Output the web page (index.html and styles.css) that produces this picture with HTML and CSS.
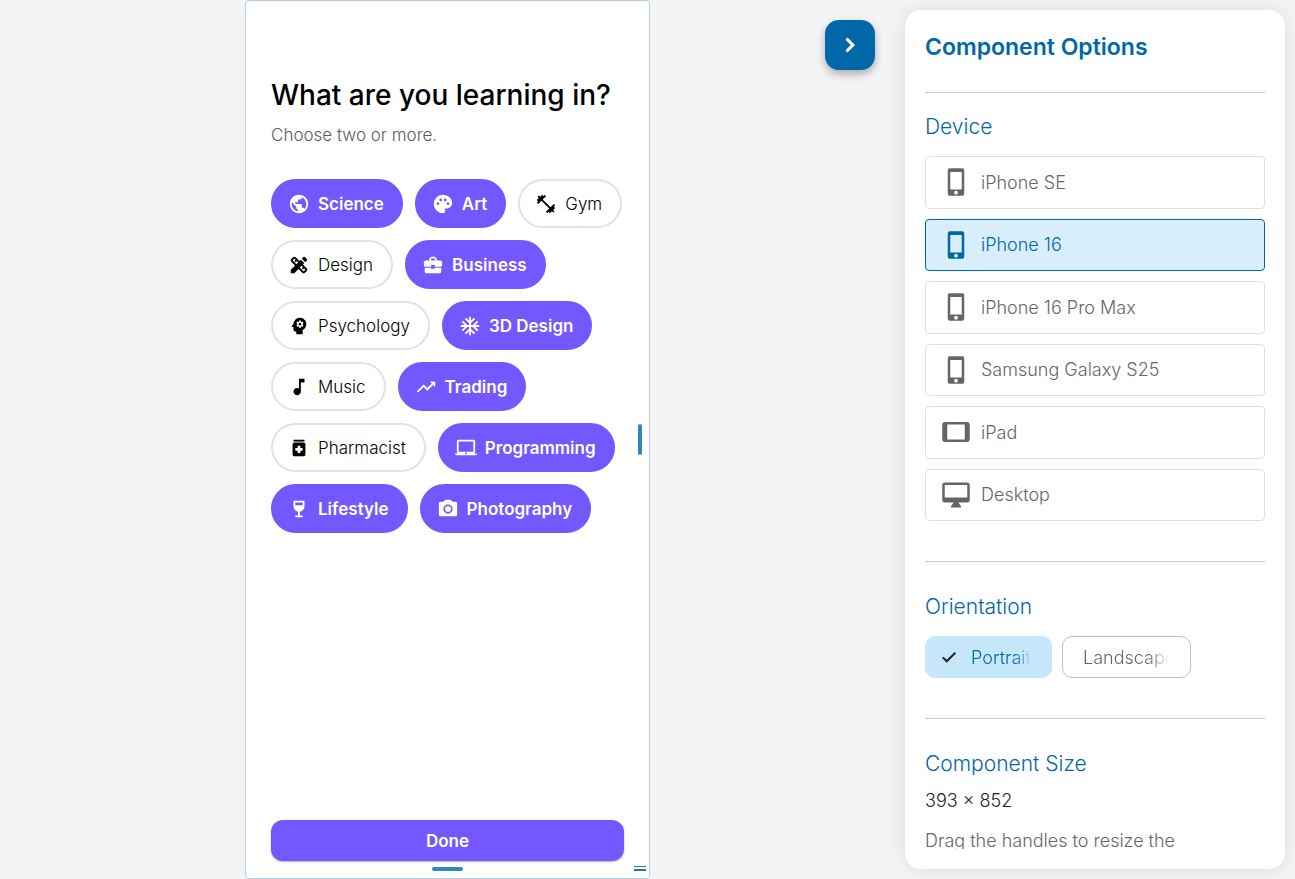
FILE: index.html
```html
<!DOCTYPE html>
<html lang="en">
<head>
<meta charset="utf-8">
<meta name="viewport" content="width=device-width, initial-scale=1">
<title>Component Preview</title>
<link rel="stylesheet" href="styles.css">
</head>
<body>
<main class="stage">
  <section class="device-frame">
    <h1 class="title">What are you learning in?</h1>
    <p class="subtitle">Choose two or more.</p>
    <div class="chips">
      <button class="chip selected" type="button" aria-pressed="true"><svg viewBox="0 0 24 24"><path d="M12 2C6.48 2 2 6.48 2 12s4.480 10 10 10 10-4.480 10-10S17.520 2 12 2zm-1 17.930c-3.950-.49-7-3.850-7-7.930 0-.62.08-1.210.21-1.790L9 15v1c0 1.100.9 2 2 2v1.930zm6.900-2.540c-.26-.81-1-1.390-1.900-1.390h-1v-3c0-.55-.45-1-1-1H8v-2h2c.55 0 1-.45 1-1V7h2c1.100 0 2-.9 2-2v-.41c2.930 1.190 5 4.060 5 7.410 0 2.080-.8 3.970-2.100 5.390z"/></svg>Science</button>
      <button class="chip selected" type="button" aria-pressed="true"><svg viewBox="0 0 24 24"><path d="M12 2C6.490 2 2 6.490 2 12s4.490 10 10 10c1.380 0 2.500-1.120 2.500-2.500 0-.61-.23-1.200-.64-1.670-.08-.1-.13-.21-.13-.33 0-.28.22-.5.5-.5H16c3.310 0 6-2.690 6-6 0-4.960-4.490-9-10-9zm5.500 11c-.83 0-1.500-.67-1.500-1.500s.67-1.500 1.500-1.500 1.500.67 1.500 1.500-.67 1.500-1.500 1.500zm-3-4c-.83 0-1.500-.67-1.500-1.500S13.670 6 14.500 6s1.500.67 1.500 1.500S15.330 9 14.500 9zM5 11.500c0-.83.67-1.500 1.500-1.500s1.500.67 1.500 1.500S7.330 13 6.500 13 5 12.330 5 11.500zm6-4c0 .83-.67 1.500-1.500 1.500S8 8.330 8 7.500 8.670 6 9.500 6s1.500.67 1.500 1.500z"/></svg>Art</button>
      <button class="chip" type="button" aria-pressed="false"><svg viewBox="0 0 24 24"><path d="M20.570 14.860L22 13.430 20.570 12 17 15.570 8.430 7 12 3.430 10.570 2 9.140 3.430 7.710 2 5.570 4.140 4.140 2.710 2.710 4.140l1.430 1.430L2 7.710l1.430 1.430L2 10.570 3.430 12 7 8.430 15.570 17 12 20.570 13.430 22l1.430-1.430L16.290 22l2.140-2.140 1.430 1.430 1.430-1.430-1.430-1.430L22 16.290z"/></svg>Gym</button>
      <button class="chip" type="button" aria-pressed="false"><svg viewBox="0 0 24 24"><path d="M16.240 11.510l1.570-1.570-3.750-3.750-1.570 1.570-4.140-4.130c-.78-.78-2.050-.78-2.830 0l-1.900 1.900c-.78.78-.78 2.050 0 2.830l4.130 4.130L3 17.250V21h3.750l4.760-4.760 4.130 4.130c.95.95 2.230.6 2.830 0l1.900-1.900c.78-.78.78-2.050 0-2.830l-4.130-4.130zm-7.060-.44L5.040 6.940l1.890-1.900L8.200 6.310 7.020 7.500l1.410 1.410 1.190-1.190 1.450 1.450-1.890 1.900zm7.880 7.890l-4.130-4.130 1.900-1.900 1.450 1.450-1.190 1.190 1.410 1.410 1.190-1.190 1.270 1.270-1.900 1.900zM20.710 7.040c.39-.39.39-1.020 0-1.410l-2.340-2.340c-.47-.47-1.120-.29-1.410 0l-1.830 1.830 3.750 3.750 1.830-1.830z"/></svg>Design</button>
      <button class="chip selected" type="button" aria-pressed="true"><svg viewBox="0 0 24 24"><path d="M10 16v-1H3.010L3 19c0 1.110.89 2 2 2h14c1.110 0 2-.89 2-2v-4h-7v1h-4zm10-9h-4.010V5l-2-2h-4l-2 2v2H4c-1.100 0-2 .9-2 2v3c0 1.110.89 2 2 2h6v-2h4v2h6c1.100 0 2-.9 2-2V9c0-1.100-.9-2-2-2zm-6 0h-4V5h4v2z"/></svg>Business</button>
      <button class="chip" type="button" aria-pressed="false"><svg viewBox="0 0 24 24"><path d="M13 8.570c-.79 0-1.430.64-1.430 1.430s.64 1.430 1.430 1.430 1.430-.64 1.430-1.430-.64-1.430-1.430-1.430z"/><path d="M13 3C9.250 3 6.200 5.940 6.020 9.640L4.100 12.200c-.25.33-.01.8.4.8H6v3c0 1.100.9 2 2 2h1v3h7v-4.680c2.360-1.120 4-3.530 4-6.320 0-3.870-3.130-7-7-7zm3 7c0 .13-.01.26-.02.39l.83.66c.08.06.1.16.05.25l-.8 1.390c-.05.09-.16.12-.24.09l-.99-.4c-.21.16-.43.29-.67.39L14 13.830c-.01.1-.1.17-.2.17h-1.600c-.1 0-.18-.07-.2-.17l-.15-1.060c-.25-.1-.47-.23-.68-.39l-.99.4c-.09.03-.2 0-.25-.09l-.8-1.390c-.05-.08-.03-.19.05-.25l.84-.66c-.01-.13-.02-.26-.02-.39s.02-.27.04-.39l-.85-.66c-.08-.06-.1-.16-.05-.26l.8-1.380c.05-.09.15-.12.24-.09l1 .4c.2-.15.43-.29.67-.39L12 6.170c.02-.1.1-.17.2-.17h1.600c.1 0 .18.07.2.17l.15 1.060c.24.1.46.23.67.39l1-.4c.09-.03.2 0 .24.09l.8 1.380c.05.09.03.2-.05.26l-.85.66c.03.12.04.25.04.39z"/></svg>Psychology</button>
      <button class="chip selected" type="button" aria-pressed="true"><svg viewBox="0 0 24 24"><path d="M22 11h-4.170l3.240-3.240-1.410-1.420L15 11h-2V9l4.660-4.660-1.420-1.410L13 6.170V2h-2v4.170L7.760 2.930 6.340 4.340 11 9v2H9L4.340 6.340 2.930 7.760 6.170 11H2v2h4.170l-3.240 3.240 1.410 1.420L9 13h2v2l-4.660 4.660 1.420 1.410L11 17.830V22h2v-4.170l3.240 3.240 1.420-1.410L13 15v-2h2l4.660 4.660 1.410-1.420L17.830 13H22z"/></svg>3D Design</button>
      <button class="chip" type="button" aria-pressed="false"><svg viewBox="0 0 24 24"><path d="M12 3v10.550c-.59-.34-1.270-.55-2-.55-2.210 0-4 1.790-4 4s1.790 4 4 4 4-1.790 4-4V7h4V3z"/></svg>Music</button>
      <button class="chip selected" type="button" aria-pressed="true"><svg viewBox="0 0 24 24"><path d="M16 6l2.290 2.290-4.880 4.880-4-4L2 16.590 3.410 18l6-6 4 4 6.300-6.290L22 12V6z"/></svg>Trading</button>
      <button class="chip" type="button" aria-pressed="false"><svg viewBox="0 0 24 24"><path d="M6 3h12v2H6z"/><path d="M17 6H7c-1.100 0-2 .9-2 2v11c0 1.100.9 2 2 2h10c1.100 0 2-.9 2-2V8c0-1.100-.9-2-2-2zm-1 9h-2.500v2.500h-3V15H8v-3h2.500V9.500h3V12H16v3z"/></svg>Pharmacist</button>
      <button class="chip selected" type="button" aria-pressed="true"><svg viewBox="0 0 24 24"><path d="M20 18c1.100 0 1.990-.9 1.990-2L22 5c0-1.100-.9-2-2-2H4c-1.100 0-2 .9-2 2v11c0 1.100.9 2 2 2H0c0 1.100.9 2 2 2h20c1.100 0 2-.9 2-2h-4zM4 5h16v11H4V5zm8 14c-.55 0-1-.45-1-1s.45-1 1-1 1 .45 1 1-.45 1-1 1z"/></svg>Programming</button>
      <button class="chip selected" type="button" aria-pressed="true"><svg viewBox="0 0 24 24"><path d="M6 3v6c0 2.970 2.160 5.430 5 5.910V19H8v2h8v-2h-3v-4.090c2.840-.48 5-2.940 5-5.910V3H6zm10 5H8V5h8v3z"/></svg>Lifestyle</button>
      <button class="chip selected" type="button" aria-pressed="true"><svg viewBox="0 0 24 24"><circle cx="12" cy="12" r="3.200"/><path d="M9 2L7.170 4H4c-1.100 0-2 .9-2 2v12c0 1.100.9 2 2 2h16c1.100 0 2-.9 2-2V6c0-1.100-.9-2-2-2h-3.170L15 2H9zm3 15c-2.760 0-5-2.240-5-5s2.240-5 5-5 5 2.240 5 5-2.240 5-5 5z"/></svg>Photography</button>
    </div>
    <button class="done" type="button">Done</button>
    <span class="handle handle-right"></span>
    <span class="handle handle-bottom"></span>
    <span class="handle-corner"></span>
  </section>
  <button class="panel-toggle" type="button" aria-label="Hide options"><svg viewBox="0 0 24 24"><path d="M10 6L8.300 7.700 12.600 12l-4.300 4.300L10 18l6-6z"/></svg></button>
</main>
<aside class="panel">
  <div class="panel-scroll">
    <h2 class="panel-title">Component Options</h2>
    <section class="group">
      <h3 class="group-title">Device</h3>
      <div class="devices">
        <button class="device" type="button"><svg viewBox="0 0 24 24"><use href="#phone"/></svg>iPhone SE</button>
        <button class="device active" type="button"><svg viewBox="0 0 24 24"><use href="#phone"/></svg>iPhone 16</button>
        <button class="device" type="button"><svg viewBox="0 0 24 24"><use href="#phone"/></svg>iPhone 16 Pro Max</button>
        <button class="device" type="button"><svg viewBox="0 0 24 24"><use href="#phone"/></svg>Samsung Galaxy S25</button>
        <button class="device" type="button"><svg viewBox="0 0 24 24"><path d="M21 4H3c-1.100 0-2 .9-2 2v12c0 1.100.9 2 2 2h18c1.100 0 2-.9 2-2V6c0-1.100-.9-2-2-2zm-2 14H5V6h14v12z"/></svg>iPad</button>
        <button class="device" type="button"><svg viewBox="0 0 24 24"><path d="M21 2H3c-1.100 0-2 .9-2 2v12c0 1.100.9 2 2 2h7l-2 3v1h8v-1l-2-3h7c1.100 0 2-.9 2-2V4c0-1.100-.9-2-2-2zm0 12H3V4h18v10z"/></svg>Desktop</button>
      </div>
    </section>
    <section class="group spaced">
      <h3 class="group-title">Orientation</h3>
      <div class="orientations">
        <button class="orientation active" type="button" aria-pressed="true"><svg viewBox="0 0 24 24"><path d="M9 15.800L4.700 11.500l-1.900 1.900L9 19.600 21.500 7.100l-1.900-1.900z"/></svg><span class="fade">Portrait</span></button>
        <button class="orientation" type="button" aria-pressed="false"><span class="fade">Landscape</span></button>
      </div>
    </section>
    <section class="group spaced">
      <h3 class="group-title">Component Size</h3>
      <p class="size">393 × 852</p>
      <p class="hint">Drag the handles to resize the</p>
    </section>
  </div>
</aside>
<svg class="sprite" aria-hidden="true"><symbol id="phone" viewBox="0 0 24 24"><path fill-rule="evenodd" d="M7 1h10a1.600 1.600 0 0 1 1.600 1.600v18.800A1.600 1.600 0 0 1 17 23H7a1.600 1.600 0 0 1-1.600-1.600V2.600A1.600 1.600 0 0 1 7 1zM7.400 4v14h9.200V4zM12 19a1.500 1.500 0 1 0 0 3 1.500 1.500 0 0 0 0-3z"/></symbol></svg>
</body>
</html>
```
FILE: styles.css
```css
* { box-sizing: border-box; }

body {
  margin: 0;
  height: 100vh;
  display: flex;
  overflow: hidden;
  background: #f4f4f7;
  font-family: Inter, "Liberation Sans", sans-serif;
  font-weight: 300;
}

h1, h2, h3, p { margin: 0; }
button { font: inherit; cursor: pointer; }
svg { fill: currentColor; flex: none; }
.sprite { position: absolute; width: 0; height: 0; }

.stage {
  position: relative;
  flex: 1;
  display: flex;
  justify-content: center;
}

.device-frame {
  position: relative;
  width: 405px;
  max-width: 100%;
  display: flex;
  flex-direction: column;
  padding: 76px 25px 17px;
  background: #fff;
  border: 1px solid #b1cfe2;
  border-radius: 4px;
}

.title {
  font-size: 28px;
  line-height: 36px;
  font-weight: 500;
  white-space: nowrap;
  color: #000;
}

.subtitle {
  margin-top: 10px;
  font-size: 17px;
  line-height: 24px;
  color: #5c5c5c;
}

.chips {
  display: flex;
  flex-wrap: wrap;
  gap: 12px;
  margin-top: 32px;
  margin-right: -4px;
}

.chip {
  display: flex;
  align-items: center;
  gap: 8px;
  height: 49px;
  padding: 0 18px 0 15px;
  border: 2px solid #e2e2e2;
  border-radius: 25px;
  background: #fff;
  color: #000;
  font-size: 17px;
}

.chip svg { width: 22px; height: 22px; }

.chip.selected {
  padding-right: 17px;
  background: #7357ff;
  border-color: #7357ff;
  color: #fff;
  font-weight: 600;
}

.done {
  margin-top: auto;
  height: 41px;
  border: 0;
  border-radius: 12px;
  background: #7357ff;
  color: #fff;
  font-size: 17px;
  font-weight: 600;
  box-shadow: 0 1px 2px rgba(0, 0, 0, .3);
}

.handle {
  position: absolute;
  border-radius: 2px;
  background: #3388bb;
}

.handle-right { right: 7px; top: 50%; width: 4px; height: 31px; margin-top: -16px; }
.handle-bottom { left: 50%; bottom: 7px; width: 31px; height: 4px; margin-left: -16px; }

.handle-corner {
  position: absolute;
  right: 3px;
  bottom: 7px;
  width: 12px;
  height: 5px;
  border: solid #1f76ab;
  border-width: 1px 0 2px;
}

.panel-toggle {
  position: absolute;
  top: 20px;
  right: 20px;
  display: grid;
  place-items: center;
  width: 50px;
  height: 50px;
  padding: 0;
  border: 0;
  border-radius: 14px;
  background: #0067a8;
  color: #fff;
  box-shadow: 0 4px 8px rgba(0, 0, 0, .3);
}

.panel-toggle svg { width: 30px; height: 30px; }

.panel {
  width: 380px;
  margin: 10px;
  padding: 20px;
  background: #fff;
  border-radius: 16px;
  box-shadow: 0 0 20px rgba(0, 0, 0, .1);
}

.panel-scroll { height: 100%; overflow: hidden; color: #666; font-size: 18px; }

.panel-title {
  padding: 2px 0 30px;
  font-size: 23px;
  line-height: 30px;
  font-weight: 600;
  color: #0067a8;
}

.group {
  padding: 20px 0 40px;
  border-top: 1px solid #c6c6d0;
}

.group.spaced { padding-top: 31px; }

.group-title {
  margin-bottom: 15px;
  font-size: 21px;
  line-height: 28px;
  font-weight: 300;
  color: #0067a8;
}

.devices {
  display: grid;
  grid-auto-rows: 1fr;
  gap: 10px;
  min-height: 365px;
}

.device {
  display: flex;
  align-items: center;
  gap: 10px;
  padding: 0 15px;
  border: 1px solid #dedede;
  border-radius: 4px;
  background: #fff;
  color: #666;
}

.device svg { width: 30px; height: 30px; }

.device.active {
  border-color: #0067a8;
  background: #d9eefb;
  color: #0067a8;
}

.orientations { display: flex; gap: 10px; }

.orientation {
  display: flex;
  align-items: center;
  gap: 13px;
  height: 42px;
  padding: 0 20px;
  border: 1px solid #c0c0cb;
  border-radius: 10px;
  background: #fff;
  color: #666;
}

.orientation svg { width: 18px; height: 18px; color: #1b1b28; }

.fade {
  width: 87px;
  overflow: hidden;
  text-align: left;
  white-space: nowrap;
  -webkit-mask-image: linear-gradient(to right, #000 75%, transparent);
  mask-image: linear-gradient(to right, #000 75%, transparent);
}

.orientation.active {
  padding-left: 14px;
  border-color: #c7e7fa;
  background: #c7e7fa;
  color: #0067a8;
}

.orientation.active .fade { width: 60px; }

.size { margin-top: -4px; line-height: 24px; color: #1f1f1f; }
.hint { margin-top: 16px; line-height: 24px; }
```
